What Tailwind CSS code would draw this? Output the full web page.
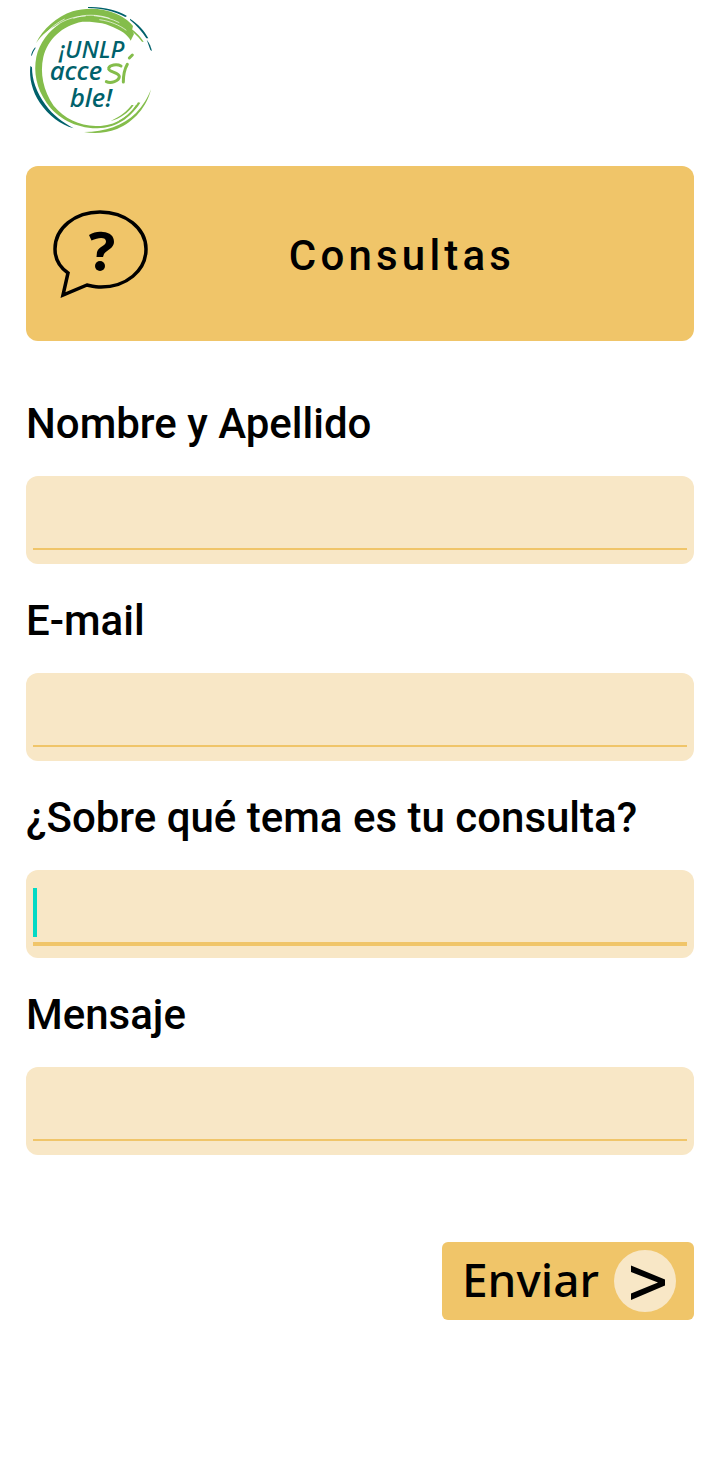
<!DOCTYPE html>
<html lang="es">
<head>
    <meta charset="UTF-8">
    <meta name="viewport" content="width=device-width, initial-scale=1.0">
    <title>Consultas - UNLP Accesible</title>
    <script src="https://cdn.jsdelivr.net/npm/@tailwindcss/browser@4"></script>
</head>
<body class="bg-white text-black font-['Roboto',sans-serif] px-[26px]">
    <header>
        <!-- Logo -->
        <svg class="w-[130px] h-[140px]" viewBox="18 0 390 420" role="img" aria-label="¡UNLP accesible!">
            <g fill="#84bd4b">
                <path d="M48 130 C68 88 110 49 158 34 C195 23 245 22 288 41 C315 53 332 67 339 78 L336 91 L342 102 L332 122 C324 107 312 97 291 87 C260 69 226 64 187 65 C125 77 83 119 70 171 C59 220 70 272 101 317 C133 356 177 376 227 378 C284 380 326 350 348 315 L353 316 C333 351 289 386 230 385 C165 384 112 354 80 309 C49 264 40 217 49 171 C58 130 86 92 122 70 C89 85 65 105 48 130Z"/>
                <path d="M393 268 C382 318 342 367 291 387 C259 399 223 402 192 396 C256 396 309 377 348 339 C370 316 383 294 393 268Z"/>
                <path d="M317 75 C342 90 361 108 371 126 L366 125 C353 108 337 92 317 80Z"/>
                <path d="M361 308 C345 334 319 356 289 367 C319 350 340 332 354 307Z"/>
                <path d="M341 315 C325 339 300 356 272 363 C300 350 321 334 335 315Z"/>
            </g>
            <g fill="none" stroke="#ffffff" stroke-width="2">
                <path d="M106 78 C134 58 165 49 197 48"/>
                <path d="M160 55 C193 42 232 43 269 55"/>
                <path d="M81 96 C96 80 113 67 134 57"/>
                <path d="M238 59 C270 63 298 75 319 91"/>
                <path d="M222 47 C250 50 275 56 298 68"/>
            </g>
            <g fill="#00616b">
                <path d="M204 21 C248 19 291 30 321 48 L316 51 C284 34 249 25 204 24Z"/>
                <path d="M330 56 C354 71 374 93 385 115 L379 115 C366 94 349 75 330 60Z"/>
                <path d="M380 119 C389 130 393 141 396 153 L391 150 L386 136Z"/>
                <path d="M46 141 C38 150 35 157 33 168 L36 166 C39 156 42 151 46 146Z"/>
                <path d="M31 198 C27 235 36 273 60 309 C86 347 121 374 161 385 C128 367 99 346 77 315 C49 277 36 240 36 202Z"/>
            </g>
            <g class="font-['Noto_Sans',sans-serif] italic font-medium" fill="#00616b">
                <text x="116" y="174" font-size="72">¡UNLP</text>
                <text x="89" y="240" font-size="78">acce</text>
                <text x="149" y="320" font-size="78">ble!</text>
            </g>
            <!-- Hand-drawn "Sí" -->
            <g fill="none" stroke="#84bd4b" stroke-width="9" stroke-linecap="round" stroke-linejoin="round">
                <path d="M303 198 C290 191 269 195 266 205 C262 216 298 217 298 230 C297 243 273 252 259 245"/>
                <path d="M322 193 C314 207 310 227 310 246"/>
                <path d="M337 165 L328 174"/>
            </g>
        </svg>
    </header>

    <main class="mt-[26px]">
        <div class="flex items-center h-[175px] rounded-xl bg-[#f0c569] pl-6">
            <svg class="w-[100px] h-[92px] mb-1 shrink-0 overflow-visible" viewBox="0 0 100 92" fill="none" aria-hidden="true">
                <path d="M18 67 C8 60 5 52 5 43 C5 22 25 6 50 6 C75 6 96 22 96 43 C96 65 76 81 51 81 C46 81 42 80 37 79 L13 89 Z" stroke="#000" stroke-width="3.5"/>
                <path d="M39 29 C44 26 48 25.5 53 26 C60 26.5 64 30 64 36 C64 42 57 44 54 48 L53 51 H46.5 L47 46 C49 40 56 40 56 35.5 C56 31 49 31 41.5 34.5 Z" fill="#000"/>
                <circle cx="50" cy="60" r="5" fill="#000"/>
            </svg>
            <h1 class="flex-1 pt-1 pr-10 text-center text-[42px] leading-[49px] font-medium tracking-widest">Consultas</h1>
        </div>

        <form class="mt-[58px]">
            <div class="flex flex-col gap-8">
                <div>
                    <label for="nombre" class="block mb-7 text-[42px] leading-[49px] font-medium">Nombre y Apellido</label>
                    <div class="flex h-[88px] rounded-xl bg-[#f8e7c6] px-[7px] pb-[14px]">
                        <input id="nombre" type="text" class="w-full border-b-2 border-[#f0c569] text-[42px] outline-none">
                    </div>
                </div>
                <div>
                    <label for="email" class="block mb-7 text-[42px] leading-[49px] font-medium">E-mail</label>
                    <div class="flex h-[88px] rounded-xl bg-[#f8e7c6] px-[7px] pb-[14px]">
                        <input id="email" type="email" class="w-full border-b-2 border-[#f0c569] text-[42px] outline-none">
                    </div>
                </div>
                <div>
                    <label for="tema" class="block mb-7 text-[42px] leading-[49px] font-medium">¿Sobre qué tema es tu consulta?</label>
                    <!-- Active field: thicker underline and cursor -->
                    <div class="relative flex h-[88px] rounded-xl bg-[#f8e7c6] px-[7px] pb-3">
                        <input id="tema" type="text" class="w-full border-b-4 border-[#f0c569] text-[42px] caret-transparent outline-none">
                        <span class="absolute left-[7px] top-[18px] w-1 h-[49px] bg-[#03dac5]"></span>
                    </div>
                </div>
                <div>
                    <label for="mensaje" class="block mb-7 text-[42px] leading-[49px] font-medium">Mensaje</label>
                    <div class="flex h-[88px] rounded-xl bg-[#f8e7c6] px-[7px] pb-[14px]">
                        <input id="mensaje" type="text" class="w-full border-b-2 border-[#f0c569] text-[42px] outline-none">
                    </div>
                </div>
            </div>

            <div class="flex justify-end mt-[87px]">
                <button type="submit" class="flex items-center justify-between w-[252px] h-[78px] rounded-md bg-[#f0c569] pl-5 pr-[18px] font-['Noto_Sans',sans-serif] text-[46px] leading-[62px] font-medium">
                    <span class="pb-1">Enviar</span>
                    <svg class="w-[62px] h-[62px] shrink-0" viewBox="0 0 62 62" aria-hidden="true">
                        <circle cx="31" cy="31" r="31" fill="#f8e7c6"/>
                        <path d="M17 15.5 L51 29.5 V35.5 L17 50 V43.5 L44 32.5 L17 22Z" fill="#000"/>
                    </svg>
                </button>
            </div>
        </form>
    </main>
</body>
</html>
